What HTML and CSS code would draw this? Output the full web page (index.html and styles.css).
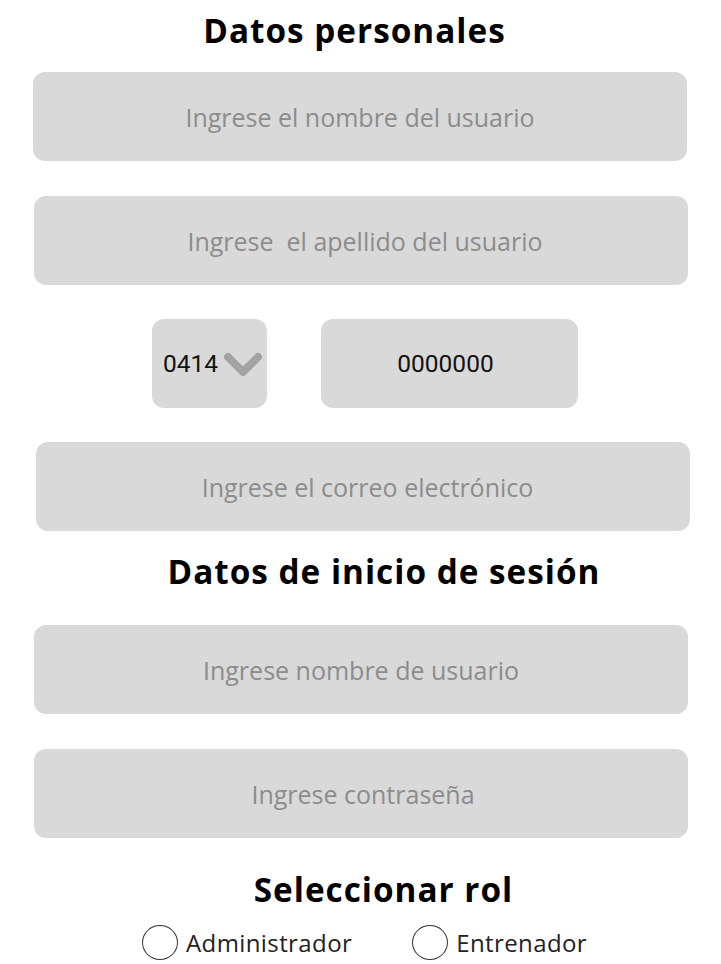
FILE: index.html
```html
<!DOCTYPE html>
<html lang="es">
<head>
<meta charset="utf-8">
<title>Registro</title>
<link rel="stylesheet" href="styles.css">
</head>
<body>
<main class="form">
  <h2 class="title title-first">Datos personales</h2>
  <input class="field" type="text" placeholder="Ingrese el nombre del usuario">
  <input class="field field-second" type="text" placeholder="Ingrese&nbsp; el apellido del usuario">
  <div class="phone-row">
    <div class="prefix">
      <span class="prefix-text">0414</span>
      <svg class="chevron" width="40" height="28" viewBox="0 0 40 28" aria-hidden="true">
        <path d="M5 6 L20 21 L35 6" fill="none" stroke="#a3a3a3" stroke-width="8" stroke-linecap="round" stroke-linejoin="round"/>
      </svg>
    </div>
    <input class="field phone" type="text" value="0000000">
  </div>
  <input class="field field-email" type="text" placeholder="Ingrese el correo electrónico">
  <h2 class="title title-second">Datos de inicio de sesión</h2>
  <input class="field field-mid" type="text" placeholder="Ingrese nombre de usuario">
  <input class="field field-mid field-last" type="password" placeholder="Ingrese contraseña">
  <h2 class="title title-third">Seleccionar rol</h2>
  <div class="roles">
    <label class="role"><span class="radio"></span>Administrador</label>
    <label class="role"><span class="radio"></span>Entrenador</label>
  </div>
</main>
</body>
</html>
```
FILE: styles.css
```css
* { box-sizing: border-box; }
html, body { margin: 0; padding: 0; background: #fff; }
body {
  font-family: "Open Sans", "Noto Sans", sans-serif;
  color: #000;
}
.form {
  width: 721px;
  display: flex;
  flex-direction: column;
  align-items: flex-start;
  padding: 0 0 0 33px;
}
.title {
  margin: 0;
  font-weight: 700;
  font-size: 33.3px;
  letter-spacing: 1px;
  line-height: 40px;
  text-align: center;
  width: 654px;
  color: #000;
}
.title-first { margin-top: 10px; margin-bottom: 22px; padding-right: 11px; }
.title-second { margin-top: 20px; margin-bottom: 34px; padding-left: 48px; }
.title-third { margin-top: 31px; margin-bottom: 16px; padding-left: 47px; }
.field {
  display: block;
  width: 654px;
  height: 89px;
  border: none;
  border-radius: 12px;
  background: #d9d9d9;
  font-family: "Open Sans", sans-serif;
  font-size: 25px;
  text-align: center;
  color: #111;
  outline: none;
  margin: 0 0 35px 0;
  padding: 0;
}
.field::placeholder { color: #8c8c8c; }
.field-second { margin-left: 1px; margin-bottom: 34px; padding-left: 8px; }
.field-email { margin-left: 3px; margin-bottom: 0; padding-left: 9px; }
.field-mid { margin-left: 1px; }
.field-last { padding-left: 4px; margin-bottom: 0; }
.phone-row {
  display: flex;
  gap: 54px;
  margin-left: 119px;
  margin-bottom: 34px;
}
.prefix {
  width: 115px;
  height: 89px;
  border-radius: 12px;
  background: #d9d9d9;
  display: flex;
  align-items: center;
  padding-left: 11px;
  gap: 5px;
}
.prefix-text {
  font-family: Roboto, sans-serif;
  font-size: 24.5px;
  color: #111;
}
.chevron { display: block; margin-top: 2px; }
.field.phone {
  width: 257px;
  height: 89px;
  margin: 0;
  padding: 0 8px 0 0;
  font-family: Roboto, sans-serif;
  font-size: 24.5px;
  color: #111;
}
.roles {
  display: flex;
  gap: 60px;
  margin-left: 109px;
}
.role {
  display: flex;
  align-items: center;
  gap: 8px;
  font-family: "Open Sans", sans-serif;
  font-size: 24px;
  letter-spacing: 0.4px;
  line-height: 35px;
  color: #222;
}
.radio {
  width: 36px;
  height: 35px;
  border: 1.6px solid #333;
  border-radius: 50%;
  display: block;
}
```
